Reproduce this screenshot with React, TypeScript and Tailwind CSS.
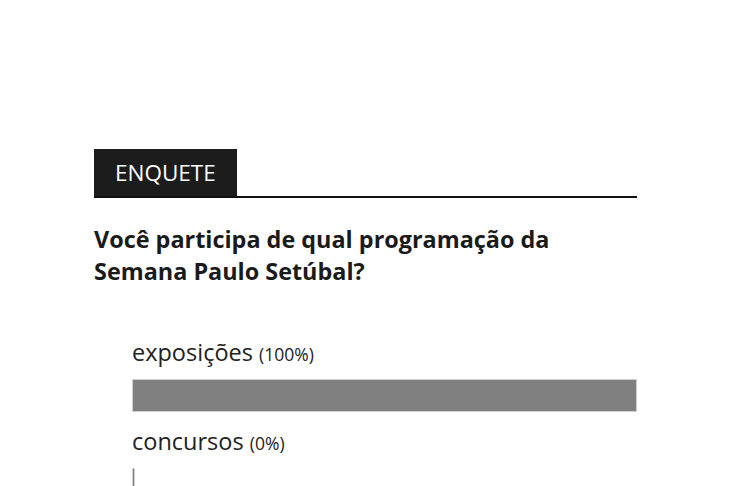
const options = [
  { label: "exposições", pct: 100 },
  { label: "concursos", pct: 0 },
];

export default function App() {
  return (
    <div className="h-[486px] overflow-hidden bg-white font-['Open_Sans',sans-serif] text-[#1a1a1a]">
      <div className="ml-[94px] w-[543px] pt-[149px]">
        <div className="flex items-end border-b-[2px] border-[#111]">
          <div className="bg-[#1c1c1c] px-[21px] h-[47px] flex items-center text-[22.5px] text-white">
            ENQUETE
          </div>
        </div>
        <h2 className="mt-[25px] text-[23.4px] font-bold leading-[32px] text-[#1a1a1a]">
          Você participa de qual programação da
          <br />
          Semana Paulo Setúbal?
        </h2>
        <ul className="mt-[50px] pl-[38px]">
          {options.map((o) => (
            <li key={o.label} className="mb-[14px]">
              <div className="text-[23.5px] leading-[30px] text-[#222]">
                {o.label} <span className="text-[17.5px]">({o.pct}%)</span>
              </div>
              <div className="mt-[10px] h-[33px]">
                <div
                  className="h-full bg-[#808080] border border-[#cfcfcf] min-w-[3px]"
                  style={{ width: `${o.pct}%` }}
                />
              </div>
            </li>
          ))}
        </ul>
      </div>
    </div>
  );
}
